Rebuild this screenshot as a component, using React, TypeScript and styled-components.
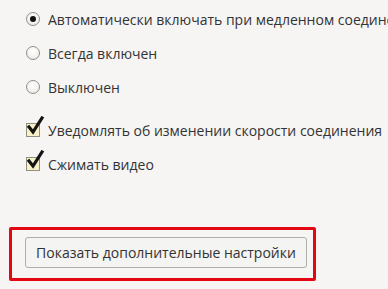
import styled, { createGlobalStyle } from "styled-components";

const Global = createGlobalStyle`
    html, body {
        margin: 0;
        padding: 0;
        background: #f6f5f4;
    }
    body {
        font-family: "Open Sans", "Noto Sans", sans-serif;
        color: #333333;
    }
`

const Page = styled.div`
    width: 388px;
    height: 289px;
    overflow: hidden;
    padding: 2px 0 0 26px;
    box-sizing: border-box;
`

const Options = styled.div`
    display: flex;
    flex-direction: column;
`

const Group = styled.div<{ $top?: number }>`
    display: flex;
    flex-direction: column;
    margin-top: ${(p) => p.$top ?? 0}px;
`

const Row = styled.label`
    display: flex;
    align-items: center;
    gap: 8px;
    height: 34px;
    font-size: 14px;
    white-space: nowrap;
`

const Radio = styled.span<{ $on?: boolean }>`
    width: 14px;
    height: 14px;
    border-radius: 50%;
    border: 1px solid #8f8f8f;
    background: radial-gradient(circle at 50% 35%, #ffffff 0%, #f3f1ea 60%, #dedbd2 100%);
    box-sizing: border-box;
    display: flex;
    align-items: center;
    justify-content: center;
    flex-shrink: 0;
    &::after {
        content: "";
        display: ${(p) => (p.$on ? "block" : "none")};
        width: 6px;
        height: 6px;
        border-radius: 50%;
        background: #111111;
    }
`

const Box = styled.span`
    position: relative;
    width: 14px;
    height: 14px;
    border: 1px solid #8f8f80;
    background: #f8f0c6;
    box-sizing: border-box;
    flex-shrink: 0;
    svg {
        position: absolute;
        left: 0px;
        top: -8px;
    }
`

const Footer = styled.div`
    margin-top: 46px;
    margin-left: -17px;
    width: 307px;
    height: 54px;
    border: 3px solid #e30613;
    border-radius: 2px;
    box-sizing: border-box;
    padding: 7px 0 0 13px;
`

const Button = styled.button`
    width: 282px;
    height: 31px;
    border: 1px solid #adadad;
    border-radius: 3px;
    background: #f4f4f2;
    font-family: "Open Sans", "Noto Sans", sans-serif;
    font-size: 14px;
    color: #333333;
    padding: 0;
`

const Check = () => (
    <svg width="18" height="20" viewBox="0 0 18 20">
        <path d="M2 11 L6 16 L15 2" fill="none" stroke="#141414" strokeWidth="3.2" strokeLinecap="square" strokeLinejoin="miter" />
    </svg>
)

const App = () => {
    return (
        <>
            <Global />
            <Page>
                <Options>
                    <Group>
                        <Row><Radio $on />Автоматически включать при медленном соединении</Row>
                        <Row><Radio />Всегда включен</Row>
                        <Row><Radio />Выключен</Row>
                    </Group>
                    <Group $top={9}>
                        <Row><Box><Check /></Box>Уведомлять об изменении скорости соединения</Row>
                        <Row><Box><Check /></Box>Сжимать видео</Row>
                    </Group>
                </Options>
                <Footer>
                    <Button>Показать дополнительные настройки</Button>
                </Footer>
            </Page>
        </>
    );
};

export default App;
